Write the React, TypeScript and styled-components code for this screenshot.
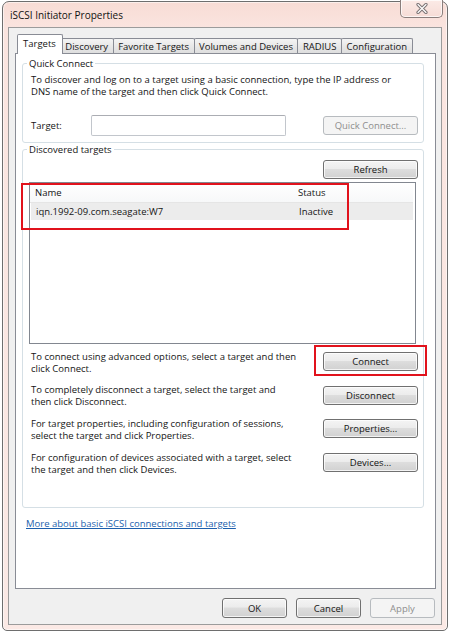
import React from "react";
import styled, { createGlobalStyle } from "styled-components";

const FONT = `"Open Sans", "Noto Sans", sans-serif`;

const GlobalStyle = createGlobalStyle`
  html, body { margin: 0; padding: 0; background: #ffffff; }
  body { font-family: ${FONT}; font-size: 9.5px; color: #151515; }
  * { box-sizing: border-box; }
`;

const Window = styled.div`
  margin: 1px 0 0 2px;
  width: 446px;
  height: 630px;
  border: 1px solid #6e6e6e;
  border-radius: 7px 7px 5px 5px;
  background: linear-gradient(to bottom, #f8dcd5 0px, #fae4df 26px, #fbe9e5 100%);
  box-shadow: inset 0 0 0 1px rgba(255, 255, 255, 0.55);
  display: flex;
  flex-direction: column;
`;

const TitleBar = styled.div`
  height: 25px;
  flex: none;
  display: flex;
  align-items: flex-start;
  justify-content: space-between;
  padding-left: 7px;
`;

const Title = styled.span`
  font-size: 10px;
  line-height: 13px;
  margin-top: 7px;
  color: #111;
`;

const CloseButton = styled.div`
  width: 43px;
  height: 18px;
  margin: -2px 4px 0 0;
  border: 1px solid #8a7e7c;
  border-top: none;
  border-radius: 0 0 5px 5px;
  background: linear-gradient(to bottom, #fbeae6, #f6dcd6);
  box-shadow: inset 0 0 0 1px rgba(255, 255, 255, 0.7);
  display: flex;
  align-items: center;
  justify-content: center;
`;

const Client = styled.div`
  flex: 1;
  margin: 0 5px 5px;
  border: 1px solid #9b9b9b;
  background: #f0f0f0;
  padding: 6px 5px 0 6px;
  display: flex;
  flex-direction: column;
`;

const TabStrip = styled.div`
  display: flex;
  align-items: flex-end;
  height: 20px;
  padding-left: 2px;
  margin-bottom: -1px;
  position: relative;
  z-index: 1;
`;

const Tab = styled.div<{ $active?: boolean }>`
  height: ${(p) => (p.$active ? 20 : 15)}px;
  margin: ${(p) => (p.$active ? "0 -2px 0 0" : "0 0 1px -1px")};
  padding: ${(p) => (p.$active ? "2px 6px 0 5px" : "0 4.5px")};
  border: 1px solid #898c95;
  border-bottom: none;
  border-radius: 2px 2px 0 0;
  background: ${(p) =>
    p.$active ? "#ffffff" : "linear-gradient(to bottom, #f4f4f4, #e6e6e6 60%, #dedede)"};
  position: relative;
  z-index: ${(p) => (p.$active ? 2 : 1)};
  display: flex;
  align-items: ${(p) => (p.$active ? "flex-start" : "center")};
  font-size: 9.5px;
  line-height: 13px;
  white-space: nowrap;
`;

const Panel = styled.div`
  flex: 1;
  background: #ffffff;
  border: 1px solid #898c95;
  padding: 3px 11px 0 6px;
  display: flex;
  flex-direction: column;
`;

const Group = styled.fieldset`
  margin: 0;
  padding: 0 5px 6px 8px;
  border: 1px solid #d5dfe5;
  border-radius: 3px;
  min-width: 0;
`;

const Legend = styled.legend`
  margin-left: -4px;
  padding: 0 2px;
  font-size: 9.5px;
  line-height: 13px;
`;

const Description = styled.p`
  margin: 0;
  font-size: 9.5px;
  line-height: 12px;
  white-space: nowrap;
`;

const IntroText = styled(Description)`
  margin-top: 4px;
`;

const TargetRow = styled.div`
  margin-top: 17px;
  height: 21px;
  display: flex;
  align-items: center;
`;

const FieldLabel = styled.span`
  width: 60px;
  font-size: 9.5px;
`;

const TextInput = styled.div`
  width: 195px;
  height: 21px;
  border: 1px solid #c2c6cc;
  border-top-color: #abadb3;
  border-radius: 2px;
  background: #fff;
`;

const Spacer = styled.div`
  flex: 1;
`;

const Button = styled.button<{ $w?: number; $h?: number }>`
  width: ${(p) => p.$w ?? 95}px;
  height: ${(p) => p.$h ?? 19}px;
  padding: 0;
  font-family: ${FONT};
  font-size: 9.5px;
  line-height: 13px;
  color: #151515;
  border: 1px solid #707070;
  border-radius: 3px;
  background: linear-gradient(to bottom, #f4f4f4 0%, #ececec 45%, #dddddd 50%, #d1d1d1 100%);
  box-shadow: inset 0 0 0 1px rgba(255, 255, 255, 0.75);
  flex: none;

  &:disabled {
    color: #8e8e8e;
    border-color: #b7bbbf;
    background: #f4f4f4;
    box-shadow: none;
  }
`;

const RightRow = styled.div`
  display: flex;
  justify-content: flex-end;
  padding-top: 4px;
`;

const ListWrap = styled.div`
  position: relative;
  margin: 3px 2px 0 -2px;
`;

const ListBox = styled.div`
  height: 162px;
  border: 1px solid #828790;
  background: #fff;
  padding: 0 2px 0 0;
`;

const ListRow = styled.div<{ $header?: boolean }>`
  display: grid;
  grid-template-columns: 263px 1fr;
  align-items: center;
  height: ${(p) => (p.$header ? 20 : 17)}px;
  padding-left: 5px;
  margin-left: ${(p) => (p.$header ? 0 : 1)}px;
  background: ${(p) => (p.$header ? "linear-gradient(to bottom, #ffffff, #f7f8f9)" : "#ececec")};
  border-bottom: ${(p) => (p.$header ? "1px solid #e5e5e5" : "none")};
  font-size: 9.5px;
  white-space: nowrap;
`;

const Highlight = styled.div<{ $l: number; $t: number; $w: number; $h: number }>`
  position: absolute;
  left: ${(p) => p.$l}px;
  top: ${(p) => p.$t}px;
  width: ${(p) => p.$w}px;
  height: ${(p) => p.$h}px;
  border: 2px solid #e1121c;
  pointer-events: none;
`;

const Actions = styled.div`
  margin-top: 1px;
  display: grid;
  grid-template-columns: 1fr 95px;
  grid-auto-rows: 33.6px;
  align-items: center;
  padding-bottom: 22px;
`;

const ActionText = styled(Description)`
  padding-top: 2px;
`;

const ButtonSlot = styled.div`
  position: relative;
  height: 19px;
`;

const HelpLink = styled.a`
  display: inline-block;
  margin: 9px 0 0 4px;
  font-size: 9.5px;
  line-height: 13px;
  color: #1c5fad;
  text-decoration: underline;
  align-self: flex-start;
`;

const Footer = styled.div`
  height: 35px;
  flex: none;
  display: flex;
  justify-content: flex-end;
  align-items: flex-start;
  gap: 9px;
  padding: 9px 1px 0 0;
`;

const CloseGlyph = () => (
  <svg width="12" height="11" viewBox="0 0 12 11">
    <path d="M2 1.5 L10 9.5 M10 1.5 L2 9.5" stroke="#7b7374" strokeWidth="3.2" strokeLinecap="round" />
    <path d="M2 1.5 L10 9.5 M10 1.5 L2 9.5" stroke="#ffffff" strokeWidth="1.2" strokeLinecap="round" />
  </svg>
);

const tabs = ["Targets", "Discovery", "Favorite Targets", "Volumes and Devices", "RADIUS", "Configuration"];

const actions: { text: [string, string]; label: string; mark?: boolean }[] = [
  { text: ["To connect using advanced options, select a target and then", "click Connect."], label: "Connect", mark: true },
  { text: ["To completely disconnect a target, select the target and", "then click Disconnect."], label: "Disconnect" },
  { text: ["For target properties, including configuration of sessions,", "select the target and click Properties."], label: "Properties..." },
  { text: ["For configuration of devices associated with a target, select", "the target and then click Devices."], label: "Devices..." },
];

export default function App() {
  return (
    <>
      <GlobalStyle />
      <Window>
        <TitleBar>
          <Title>iSCSI Initiator Properties</Title>
          <CloseButton>
            <CloseGlyph />
          </CloseButton>
        </TitleBar>
        <Client>
          <TabStrip>
            {tabs.map((t, i) => (
              <Tab key={t} $active={i === 0}>
                {t}
              </Tab>
            ))}
          </TabStrip>
          <Panel>
            <Group>
              <Legend>Quick Connect</Legend>
              <IntroText>
                To discover and log on to a target using a basic connection, type the IP address or
                <br />
                DNS name of the target and then click Quick Connect.
              </IntroText>
              <TargetRow>
                <FieldLabel>Target:</FieldLabel>
                <TextInput />
                <Spacer />
                <Button disabled>Quick Connect...</Button>
              </TargetRow>
            </Group>
            <Group>
              <Legend>Discovered targets</Legend>
              <RightRow>
                <Button>Refresh</Button>
              </RightRow>
              <ListWrap>
                <ListBox>
                  <ListRow $header>
                    <span>Name</span>
                    <span>Status</span>
                  </ListRow>
                  <ListRow>
                    <span>iqn.1992-09.com.seagate:W7</span>
                    <span>Inactive</span>
                  </ListRow>
                </ListBox>
                <Highlight $l={-8} $t={1} $w={328} $h={47} />
              </ListWrap>
              <Actions>
                {actions.map((a) => (
                  <React.Fragment key={a.label}>
                    <ActionText>
                      {a.text[0]}
                      <br />
                      {a.text[1]}
                    </ActionText>
                    <ButtonSlot>
                      <Button>{a.label}</Button>
                      {a.mark && <Highlight $l={-9} $t={-7} $w={113} $h={31} />}
                    </ButtonSlot>
                  </React.Fragment>
                ))}
              </Actions>
            </Group>
            <HelpLink>More about basic iSCSI connections and targets</HelpLink>
          </Panel>
          <Footer>
            <Button $w={65} $h={20}>OK</Button>
            <Button $w={65} $h={20}>Cancel</Button>
            <Button $w={65} $h={20} disabled>
              Apply
            </Button>
          </Footer>
        </Client>
      </Window>
    </>
  );
}
